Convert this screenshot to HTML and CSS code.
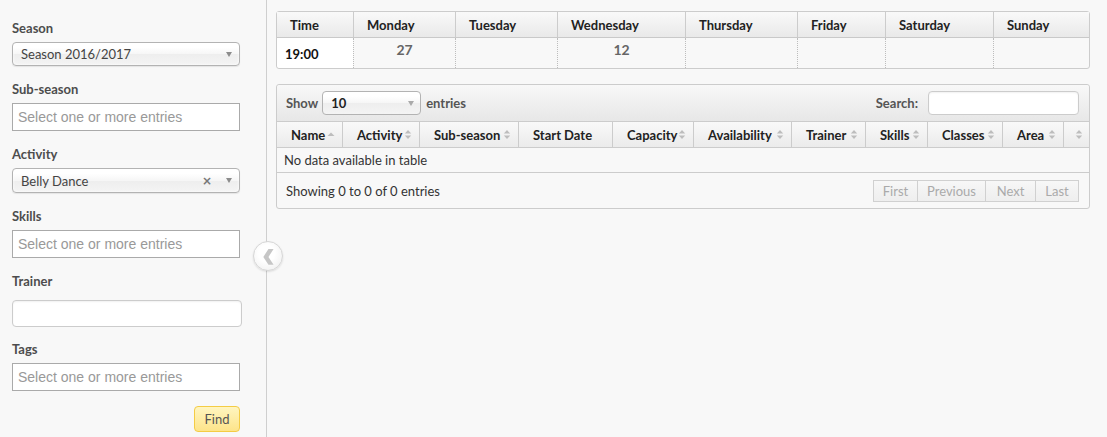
FILE: index.html
```html
<!DOCTYPE html>
<html>
<head>
<meta charset="utf-8">
<link rel="stylesheet" href="styles.css">
</head>
<body>
<div class="app">
  <aside class="sidebar">
    <div class="field">
      <label class="lbl">Season</label>
      <div class="select">
        <span class="sel-text">Season 2016/2017</span>
        <span class="arrow"></span>
      </div>
    </div>
    <div class="field">
      <label class="lbl">Sub-season</label>
      <div class="multi">Select one or more entries</div>
    </div>
    <div class="field">
      <label class="lbl">Activity</label>
      <div class="select tall">
        <span class="sel-text">Belly Dance</span>
        <span class="clear">×</span>
        <span class="arrow"></span>
      </div>
    </div>
    <div class="field">
      <label class="lbl">Skills</label>
      <div class="multi">Select one or more entries</div>
    </div>
    <div class="field trainer">
      <label class="lbl">Trainer</label>
      <div class="text-input"></div>
    </div>
    <div class="field">
      <label class="lbl">Tags</label>
      <div class="multi">Select one or more entries</div>
    </div>
    <div class="actions">
      <button class="find">Find</button>
    </div>
    <button class="collapse" aria-label="Collapse">
      <svg width="30" height="30" viewBox="0 0 30 30"><polygon points="15.5,7.5 21,7.5 15.5,16 21,24.5 15.5,24.5 10,16" fill="#c6c6c6"/></svg>
    </button>
  </aside>
  <main class="content">
    <table class="calendar">
      <colgroup>
        <col style="width:76px"><col style="width:102px"><col style="width:102px"><col style="width:128px"><col style="width:112px"><col style="width:88px"><col style="width:108px"><col style="width:96px">
      </colgroup>
      <thead>
        <tr><th>Time</th><th>Monday</th><th>Tuesday</th><th>Wednesday</th><th>Thursday</th><th>Friday</th><th>Saturday</th><th>Sunday</th></tr>
      </thead>
      <tbody>
        <tr><td class="time">19:00</td><td class="num">27</td><td></td><td class="num">12</td><td></td><td></td><td></td><td></td></tr>
      </tbody>
    </table>

    <div class="dt">
      <div class="dt-toolbar">
        <div class="dt-length">
          <span>Show</span>
          <div class="len-select"><span>10</span><span class="arrow"></span></div>
          <span>entries</span>
        </div>
        <div class="dt-search">
          <span>Search:</span>
          <div class="search-input"></div>
        </div>
      </div>
      <table class="dt-table">
        <colgroup>
          <col style="width:65px"><col style="width:77px"><col style="width:99px"><col style="width:94px"><col style="width:81px"><col style="width:98px"><col style="width:74px"><col style="width:62px"><col style="width:75px"><col style="width:61px"><col style="width:26px">
        </colgroup>
        <thead>
          <tr>
            <th>Name<span class="sort"><svg width="8" height="11" viewBox="0 0 8 11"><polygon points="0.5,7 7.5,7 4,3.5" fill="#bdbdbd"/></svg></span></th>
            <th>Activity<span class="sort"><svg width="8" height="11" viewBox="0 0 8 11"><path d="M0.8 4.6 L4 1 L7.2 4.6 Z M0.8 6.4 L4 10 L7.2 6.4 Z" fill="#bdbdbd"/></svg></span></th>
            <th>Sub-season<span class="sort"><svg width="8" height="11" viewBox="0 0 8 11"><path d="M0.8 4.6 L4 1 L7.2 4.6 Z M0.8 6.4 L4 10 L7.2 6.4 Z" fill="#bdbdbd"/></svg></span></th>
            <th>Start Date</th>
            <th>Capacity<span class="sort"><svg width="8" height="11" viewBox="0 0 8 11"><path d="M0.8 4.6 L4 1 L7.2 4.6 Z M0.8 6.4 L4 10 L7.2 6.4 Z" fill="#bdbdbd"/></svg></span></th>
            <th>Availability<span class="sort"><svg width="8" height="11" viewBox="0 0 8 11"><path d="M0.8 4.6 L4 1 L7.2 4.6 Z M0.8 6.4 L4 10 L7.2 6.4 Z" fill="#bdbdbd"/></svg></span></th>
            <th>Trainer<span class="sort"><svg width="8" height="11" viewBox="0 0 8 11"><path d="M0.8 4.6 L4 1 L7.2 4.6 Z M0.8 6.4 L4 10 L7.2 6.4 Z" fill="#bdbdbd"/></svg></span></th>
            <th>Skills<span class="sort"><svg width="8" height="11" viewBox="0 0 8 11"><path d="M0.8 4.6 L4 1 L7.2 4.6 Z M0.8 6.4 L4 10 L7.2 6.4 Z" fill="#bdbdbd"/></svg></span></th>
            <th>Classes<span class="sort"><svg width="8" height="11" viewBox="0 0 8 11"><path d="M0.8 4.6 L4 1 L7.2 4.6 Z M0.8 6.4 L4 10 L7.2 6.4 Z" fill="#bdbdbd"/></svg></span></th>
            <th>Area<span class="sort"><svg width="8" height="11" viewBox="0 0 8 11"><path d="M0.8 4.6 L4 1 L7.2 4.6 Z M0.8 6.4 L4 10 L7.2 6.4 Z" fill="#bdbdbd"/></svg></span></th>
            <th class="icon-only"><span class="sort"><svg width="8" height="11" viewBox="0 0 8 11"><path d="M0.8 4.6 L4 1 L7.2 4.6 Z M0.8 6.4 L4 10 L7.2 6.4 Z" fill="#bdbdbd"/></svg></span></th>
          </tr>
        </thead>
        <tbody>
          <tr><td colspan="11" class="empty">No data available in table</td></tr>
        </tbody>
      </table>
      <div class="dt-footer">
        <span class="info">Showing 0 to 0 of 0 entries</span>
        <div class="pager">
          <span class="pbtn w-first">First</span><span class="pbtn w-prev">Previous</span><span class="pbtn w-next">Next</span><span class="pbtn w-last">Last</span>
        </div>
      </div>
    </div>
  </main>
</div>
</body>
</html>
```

FILE: styles.css
```css
html, body {
  margin: 0;
  padding: 0;
}
body {
  background: #f8f8f8;
  font-family: "Lato", "PT Sans", sans-serif;
  font-size: 13px;
  color: #333;
}
.app {
  display: flex;
  height: 437px;
  overflow: hidden;
}

/* Sidebar */
.sidebar {
  position: relative;
  box-sizing: border-box;
  width: 267px;
  flex: 0 0 267px;
  border-right: 1px solid #cfcfcf;
  padding: 20px 0 0 12px;
  display: flex;
  flex-direction: column;
}
.field {
  display: flex;
  flex-direction: column;
  margin-bottom: 15px;
}
.lbl {
  display: block;
  font-weight: bold;
  font-size: 13px;
  line-height: 16px;
  color: #4d4d4d;
  margin-bottom: 6px;
}
.field.trainer .lbl {
  margin-bottom: 11px;
}
.select {
  box-sizing: border-box;
  position: relative;
  width: 228px;
  height: 24px;
  border: 1px solid #b3b3b3;
  border-radius: 4px;
  background: linear-gradient(#ffffff 20%, #f6f6f6 50%, #eeeeee 52%, #f4f4f4 100%);
  box-shadow: 0 0 3px #fff inset, 0 1px 1px rgba(0,0,0,0.08);
  display: flex;
  align-items: center;
  padding-left: 8px;
  color: #444;
}
.select.tall {
  height: 25px;
}
.sel-text {
  flex: 1;
  font-size: 13px;
}
.select .clear {
  font-family: "DejaVu Sans", sans-serif;
  font-weight: bold;
  font-size: 12px;
  color: #777;
  margin-right: 14px;
}
.arrow {
  width: 0;
  height: 0;
  border-left: 3.5px solid transparent;
  border-right: 3.5px solid transparent;
  border-top: 5px solid #8c8c8c;
  margin-right: 7px;
}
.multi {
  box-sizing: border-box;
  width: 228px;
  height: 28px;
  border: 1px solid #aaaaaa;
  background: #fff;
  font-family: "Liberation Sans", Arial, sans-serif;
  font-size: 14px;
  color: #999;
  padding-left: 5px;
  display: flex;
  align-items: center;
}
.text-input {
  box-sizing: border-box;
  width: 230px;
  height: 27px;
  border: 1px solid #cccccc;
  border-radius: 4px;
  background: #fff;
  box-shadow: inset 0 1px 2px rgba(0,0,0,0.06);
}
.field.trainer {
  margin-bottom: 14px;
}
.actions {
  display: flex;
  width: 228px;
  justify-content: flex-end;
}
.find {
  box-sizing: border-box;
  width: 46px;
  height: 26px;
  border: 1px solid #f4cc45;
  border-radius: 4px;
  background: linear-gradient(#fff5c0, #fde48a);
  font-family: "Lato", sans-serif;
  font-size: 13px;
  color: #555;
  padding: 0;
  cursor: pointer;
}
.collapse {
  position: absolute;
  left: 253px;
  top: 241px;
  width: 30px;
  height: 30px;
  padding: 0;
  border: 1px solid #d6d6d6;
  border-radius: 50%;
  background: radial-gradient(circle at 45% 40%, #ffffff 35%, #ececec 100%);
  box-shadow: 0 1px 2px rgba(0,0,0,0.12);
  display: flex;
  align-items: center;
  justify-content: center;
}
.collapse svg {
  display: block;
}

/* Content */
.content {
  flex: 1;
  padding: 11px 17px 0 9px;
  display: flex;
  flex-direction: column;
}

.calendar {
  width: 814px;
  table-layout: fixed;
  border-collapse: separate;
  border-spacing: 0;
  border: 1px solid #cccccc;
  border-radius: 3px;
  background: #f8f8f8;
}
.calendar th {
  box-sizing: border-box;
  height: 26px;
  text-align: left;
  font-weight: bold;
  font-size: 13px;
  color: #222;
  padding: 0 0 0 13px;
  background: linear-gradient(#f9f9f9, #e9e9e9);
  border-bottom: 1px solid #c9c9c9;
}
.calendar th + th {
  border-left: 1px solid #cccccc;
}
.calendar td {
  box-sizing: border-box;
  height: 30px;
  padding: 0;
  font-weight: bold;
  vertical-align: middle;
}
.calendar td + td {
  border-left: 1px dotted #bdbdbd;
}
.calendar td.time {
  background: #fff;
  color: #111;
  padding-left: 8px;
  padding-top: 1px;
  border-bottom-left-radius: 3px;
}
.calendar td.num {
  text-align: center;
  color: #666;
  vertical-align: top;
  padding-top: 3px;
  font-size: 14px;
}

/* Data table */
.dt {
  margin-top: 15px;
  width: 814px;
  box-sizing: border-box;
  border: 1px solid #cccccc;
  border-radius: 3px;
  background: #f8f8f8;
}
.dt-toolbar {
  height: 36px;
  display: flex;
  align-items: center;
  justify-content: space-between;
  padding: 0 10px 0 9px;
  background: linear-gradient(#f8f8f8, #e7e7e7);
  border-bottom: 1px solid #cccccc;
  border-radius: 3px 3px 0 0;
  font-weight: bold;
  color: #555;
}
.dt-length, .dt-search {
  display: flex;
  align-items: center;
}
.len-select {
  box-sizing: border-box;
  width: 99px;
  height: 24px;
  margin: 0 5px 0 4px;
  border: 1px solid #b3b3b3;
  border-radius: 4px;
  background: linear-gradient(#ffffff 20%, #f6f6f6 50%, #eeeeee 52%, #f4f4f4 100%);
  display: flex;
  align-items: center;
  justify-content: space-between;
  padding-left: 8px;
  color: #222;
}
.len-select .arrow {
  margin-right: 6px;
  border-top-color: #aaa;
}
.search-input {
  box-sizing: border-box;
  width: 151px;
  height: 24px;
  margin-left: 10px;
  border: 1px solid #cccccc;
  border-radius: 4px;
  background: #fff;
  box-shadow: inset 0 1px 2px rgba(0,0,0,0.06);
  margin-top: -1px;
}
.dt-table {
  width: 812px;
  table-layout: fixed;
  border-collapse: separate;
  border-spacing: 0;
}
.dt-table th {
  box-sizing: border-box;
  height: 26px;
  text-align: left;
  font-weight: bold;
  font-size: 13px;
  color: #222;
  padding: 0 7px 0 14px;
  white-space: nowrap;
  background: linear-gradient(#f9f9f9, #ebebeb);
  border-bottom: 1px solid #cccccc;
}
.dt-table th + th {
  border-left: 1px solid #cccccc;
}
.dt-table th.icon-only {
  padding: 0 6px 0 0;
}
.sort {
  float: right;
  display: flex;
  align-items: center;
  height: 16px;
}
.sort svg {
  display: block;
}
.dt-table td.empty {
  box-sizing: border-box;
  height: 25px;
  padding: 0 0 0 7px;
  border-bottom: 1px solid #cccccc;
  color: #333;
}
.dt-footer {
  height: 35px;
  display: flex;
  align-items: center;
  justify-content: space-between;
  padding: 0 10px 0 9px;
}
.info {
  color: #333;
}
.pager {
  display: flex;
  margin-top: 1px;
}
.pbtn {
  box-sizing: border-box;
  height: 22px;
  display: flex;
  align-items: center;
  justify-content: center;
  border: 1px solid #d0d0d0;
  background: linear-gradient(#f7f7f7, #eeeeee);
  color: #aaaaaa;
}
.pbtn + .pbtn {
  border-left: none;
}
.w-first { width: 45px; }
.w-prev { width: 68px; }
.w-next { width: 50px; }
.w-last { width: 43px; }
```
